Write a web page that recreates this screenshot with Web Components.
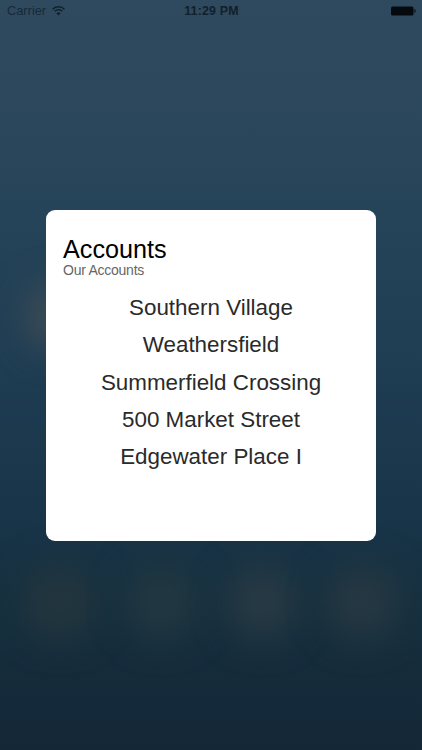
<!DOCTYPE html>
<html>
<head>
<meta charset="utf-8">
<style>
    html, body {
        margin: 0;
        height: 100%;
    }
    body {
        font-family: "Liberation Sans", Arial, sans-serif;
    }
</style>
</head>
<body>
<blurred-screen>
    <status-bar slot="status" carrier="Carrier" time="11:29 PM"></status-bar>
    <accounts-card title-text="Accounts" subtitle="Our Accounts">
        <account-row>Southern Village</account-row>
        <account-row>Weathersfield</account-row>
        <account-row>Summerfield Crossing</account-row>
        <account-row>500 Market Street</account-row>
        <account-row>Edgewater Place I</account-row>
    </accounts-card>
</blurred-screen>

<script>
class BlurredScreenElement extends HTMLElement {
    constructor() {
        super();
        this.attachShadow({mode : "open"});

        this.shadowRoot.innerHTML = `
            <style>
                :host {
                    display: flex;
                    flex-direction: column;
                    width: 422px;
                    height: 750px;
                    overflow: hidden;
                    position: relative;
                    background: linear-gradient(180deg, #2f4a5e 0%, #2d485c 12%, #264459 28%, #1f3d53 48%, #183448 70%, #16303f 80%, #142737 100%);
                }
                .glow {
                    position: absolute;
                    border-radius: 50%;
                    filter: blur(18px);
                }
                .content {
                    position: relative;
                    flex: 1;
                    display: flex;
                    justify-content: center;
                    padding-top: 190px;
                }
            </style>
            <div class="glow" style="left:24px;top:566px;width:72px;height:72px;background:#24363e"></div>
            <div class="glow" style="left:126px;top:566px;width:72px;height:72px;background:#233841"></div>
            <div class="glow" style="left:228px;top:566px;width:68px;height:72px;background:#293a44"></div>
            <div class="glow" style="left:326px;top:566px;width:72px;height:72px;background:#273842"></div>
            <div class="glow" style="left:30px;top:285px;width:40px;height:64px;background:#444f55"></div>
            <slot name="status"></slot>
            <div class="content"><slot></slot></div>
        `;
    }
}

class StatusBarElement extends HTMLElement {
    constructor() {
        super();
        this.attachShadow({mode : "open"});

        this.shadowRoot.innerHTML = `
            <style>
                :host {
                    display: grid;
                    grid-template-columns: 1fr auto 1fr;
                    align-items: center;
                    box-sizing: border-box;
                    height: 20px;
                    padding: 1px 6px 0 7px;
                    color: #10202c;
                    position: relative;
                }
                .left {
                    display: flex;
                    align-items: center;
                    gap: 6px;
                    font-size: 12.8px;
                    color: #16293a;
                }
                .time {
                    font-weight: bold;
                    font-size: 12.4px;
                    letter-spacing: 0.2px;
                }
                .right {
                    display: flex;
                    justify-content: flex-end;
                }
                svg {
                    display: block;
                }
            </style>
            <div class="left">
                <span>${this.getAttribute("carrier")}</span>
                <svg width="13" height="10" viewBox="0 0 13 10">
                    <path d="M0.5 3.2 A8.5 8.5 0 0 1 12.5 3.2" fill="none" stroke="#10202c" stroke-width="1.4"/>
                    <path d="M2.6 5.3 A5.6 5.6 0 0 1 10.4 5.3" fill="none" stroke="#10202c" stroke-width="1.4"/>
                    <path d="M4.4 7.2 A3.2 3.2 0 0 1 8.6 7.2 L6.5 9.5 Z" fill="#10202c"/>
                </svg>
            </div>
            <div class="time">${this.getAttribute("time")}</div>
            <div class="right">
                <svg width="25" height="10" viewBox="0 0 25 10">
                    <rect x="0" y="0.5" width="22.5" height="9" rx="1.5" fill="#050a0e"/>
                    <rect x="23.2" y="3.5" width="1.3" height="3" fill="#0a1218"/>
                </svg>
            </div>
        `;
    }
}

class AccountsCardElement extends HTMLElement {
    constructor() {
        super();
        this.attachShadow({mode : "open"});

        this.shadowRoot.innerHTML = `
            <style>
                :host {
                    display: block;
                    box-sizing: border-box;
                    width: 330px;
                    height: 331px;
                    background: #fff;
                    border-radius: 9px;
                    padding: 26px 17px 0;
                }
                h1 {
                    margin: 0;
                    font-size: 25.2px;
                    line-height: 26px;
                    font-weight: normal;
                    color: #000;
                }
                h2 {
                    margin: 0;
                    font-size: 14px;
                    line-height: 16px;
                    font-weight: normal;
                    color: #666;
                    letter-spacing: -0.25px;
                }
                .rows {
                    display: flex;
                    flex-direction: column;
                    margin-top: 11px;
                }
            </style>
            <h1>${this.getAttribute("title-text")}</h1>
            <h2>${this.getAttribute("subtitle")}</h2>
            <div class="rows"><slot></slot></div>
        `;
    }
}

class AccountRowElement extends HTMLElement {
    constructor() {
        super();
        this.attachShadow({mode : "open"});

        this.shadowRoot.innerHTML = `
            <style>
                :host {
                    display: block;
                    height: 37.25px;
                    line-height: 37.25px;
                    font-size: 22.4px;
                    text-align: center;
                    color: #2a2a2a;
                }
            </style>
            <slot></slot>
        `;
    }
}

customElements.define("blurred-screen", BlurredScreenElement);
customElements.define("status-bar", StatusBarElement);
customElements.define("accounts-card", AccountsCardElement);
customElements.define("account-row", AccountRowElement);
</script>
</body>
</html>
